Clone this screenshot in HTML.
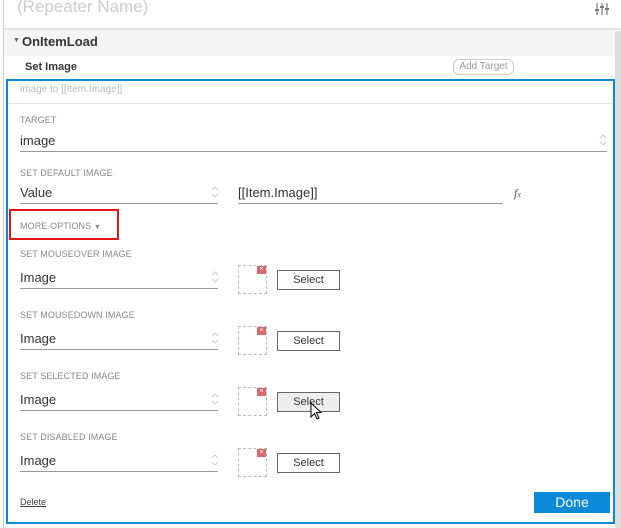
<!DOCTYPE html>
<html><head><style>
*{margin:0;padding:0;box-sizing:border-box}
body{width:621px;height:528px;position:relative;overflow:hidden;background:#fff;font-family:"Liberation Sans",sans-serif}
.a{position:absolute}
.lbl{position:absolute;left:20px;font-size:9px;color:#888;letter-spacing:.1px}
.val{position:absolute;font-size:13px;color:#333}
.ul{position:absolute;height:1px;background:#999}
.chev{position:absolute;width:8px;height:12px}
.dash{position:absolute;width:29px;height:29px;border:1px dashed #bbb}
.rx{position:absolute;width:9px;height:8px;background:#d76b6b;color:#fff;font-size:7px;line-height:8px;text-align:center}
.btn{position:absolute;left:277px;width:63px;height:20px;border:1px solid #666;font-size:11px;color:#333;text-align:center;line-height:18px;background:#fff}
</style></head><body>
<svg width="0" height="0" style="position:absolute"><defs><symbol id="ch" viewBox="0 0 8 12"><path d="M1 4 L4 1 L7 4 M1 8 L4 11 L7 8" fill="none" stroke="#ccc" stroke-width="1"/></symbol></defs></svg>
<div class="a" style="left:3px;top:0;width:1px;height:528px;background:#ccc"></div>
<div class="a" style="left:17px;top:-3px;font-size:17px;color:#ccc">(Repeater Name)</div>
<svg class="a" style="left:595px;top:3px" width="14" height="12"><g stroke="#777" stroke-width="1.2"><line x1="2" y1="0" x2="2" y2="12"/><line x1="7" y1="0" x2="7" y2="12"/><line x1="12" y1="0" x2="12" y2="12"/></g><g fill="#777"><rect x="0" y="6" width="4" height="2"/><rect x="5" y="3" width="4" height="2"/><rect x="10" y="5" width="4" height="2"/></g></svg>
<div class="a" style="left:4px;top:28px;width:617px;height:2px;background:#e2e2e2"></div>
<div class="a" style="left:4px;top:30px;width:611px;height:26px;background:#f5f5f5"></div>
<div class="a" style="left:13px;top:37px;font-size:7px;color:#666">▼</div>
<div class="a" style="left:22px;top:34px;font-size:13px;font-weight:bold;color:#333">OnItemLoad</div>
<div class="a" style="left:615px;top:31px;width:6px;height:497px;background:#ddd"></div>
<div class="a" style="left:25px;top:61px;font-size:11px;font-weight:bold;color:#333">Set Image</div>
<div class="a" style="left:453px;top:59px;width:61px;height:16px;border:1px solid #ccc;border-radius:6px;font-size:10px;color:#999;text-align:center;line-height:14px">Add Target</div>
<div class="a" style="left:6px;top:79px;width:609px;height:445px;border:2px solid #0a8ad8"></div>
<div class="a" style="left:20px;top:84px;font-size:10px;color:#bbb">image to [[Item.Image]]</div>
<div class="a" style="left:8px;top:103px;width:605px;height:1px;background:#e5e5e5"></div>
<div class="lbl" style="top:115px">TARGET</div>
<div class="val" style="left:20px;top:133px">image</div>
<svg class="chev" style="left:599px;top:134px"><use href="#ch"/></svg>
<div class="ul" style="left:20px;top:151px;width:587px"></div>
<div class="lbl" style="top:168px">SET DEFAULT IMAGE</div>
<div class="val" style="left:20px;top:185px">Value</div>
<svg class="chev" style="left:211px;top:186px"><use href="#ch"/></svg>
<div class="ul" style="left:20px;top:203px;width:198px"></div>
<div class="val" style="left:238px;top:185px">[[Item.Image]]</div>
<div class="ul" style="left:238px;top:203px;width:265px"></div>
<div class="a" style="left:514px;top:186px;font-size:12px;font-style:italic;color:#555;font-family:'Liberation Serif',serif">f<span style="font-size:8px">x</span></div>
<div class="a" style="left:9px;top:209px;width:110px;height:31px;border:2px solid #e8141b"></div>
<div class="lbl" style="top:221px">MORE OPTIONS <span style="font-size:7px">▼</span></div>

<div class="lbl" style="top:249px">SET MOUSEOVER IMAGE</div>
<div class="val" style="left:20px;top:270px">Image</div>
<svg class="chev" style="left:211px;top:271px"><use href="#ch"/></svg>
<div class="ul" style="left:20px;top:288px;width:198px"></div>
<div class="dash" style="left:238px;top:265px"></div><div class="rx" style="left:257px;top:266px">×</div>
<div class="btn" style="top:270px">Select</div>

<div class="lbl" style="top:310px">SET MOUSEDOWN IMAGE</div>
<div class="val" style="left:20px;top:331px">Image</div>
<svg class="chev" style="left:211px;top:332px"><use href="#ch"/></svg>
<div class="ul" style="left:20px;top:349px;width:198px"></div>
<div class="dash" style="left:238px;top:326px"></div><div class="rx" style="left:257px;top:327px">×</div>
<div class="btn" style="top:331px">Select</div>

<div class="lbl" style="top:371px">SET SELECTED IMAGE</div>
<div class="val" style="left:20px;top:392px">Image</div>
<svg class="chev" style="left:211px;top:393px"><use href="#ch"/></svg>
<div class="ul" style="left:20px;top:410px;width:198px"></div>
<div class="dash" style="left:238px;top:387px"></div><div class="rx" style="left:257px;top:388px">×</div>
<div class="btn" style="top:392px;background:#eee">Select</div>
<svg class="a" style="left:310px;top:402px" width="14" height="20"><path d="M1 1 L1 15 L4.5 11.5 L7 17 L9 16 L6.5 10.5 L11 10.5 Z" fill="#fff" stroke="#000" stroke-width="1"/></svg>

<div class="lbl" style="top:432px">SET DISABLED IMAGE</div>
<div class="val" style="left:20px;top:453px">Image</div>
<svg class="chev" style="left:211px;top:454px"><use href="#ch"/></svg>
<div class="ul" style="left:20px;top:471px;width:198px"></div>
<div class="dash" style="left:238px;top:448px"></div><div class="rx" style="left:257px;top:449px">×</div>
<div class="btn" style="top:453px">Select</div>

<div class="a" style="left:20px;top:497px;font-size:9px;color:#444;text-decoration:underline">Delete</div>
<div class="a" style="left:534px;top:492px;width:76px;height:21px;background:#0a8ad8;color:#fff;font-size:14px;text-align:center;line-height:21px">Done</div>
</body></html>
